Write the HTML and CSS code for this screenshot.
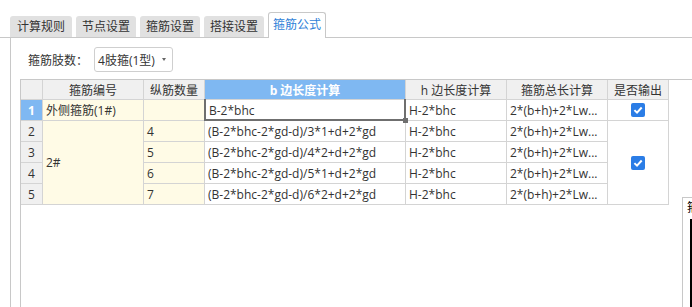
FILE: index.html
```html
<!DOCTYPE html>
<html>
<head>
<meta charset="utf-8">
<link rel="stylesheet" href="styles.css">
</head>
<body>
    <div class="tabs">
        <span class="tab">计算规则</span>
        <span class="tab">节点设置</span>
        <span class="tab">箍筋设置</span>
        <span class="tab">搭接设置</span>
        <span class="tab active">箍筋公式</span>
    </div>

    <div class="panel">
        <div class="form-row">
            <label class="label">箍筋肢数：</label>
            <div class="select">4肢箍(1型)<span class="caret"></span></div>
        </div>

        <div class="grid-wrap">
            <div class="grid">
                <div class="cell head"></div>
                <div class="cell head center">箍筋编号</div>
                <div class="cell head center">纵筋数量</div>
                <div class="cell head center active-col">b 边长度计算</div>
                <div class="cell head center">h 边长度计算</div>
                <div class="cell head center">箍筋总长计算</div>
                <div class="cell head center">是否输出</div>

                <div class="cell rowhead active-row">1</div>
                <div class="cell fixed">外侧箍筋(1#)</div>
                <div class="cell fixed"></div>
                <div class="cell selected">B-2*bhc</div>
                <div class="cell">H-2*bhc</div>
                <div class="cell">2*(b+h)+2*Lw...</div>
                <div class="cell center"><span class="check"><svg width="10" height="10" viewBox="0 0 10 10"><path d="M1.4 5.1 L4 7.6 L8.7 2.5" fill="none" stroke="#fff" stroke-width="2"/></svg></span></div>

                <div class="cell rowhead">2</div>
                <div class="cell fixed span4">2#</div>
                <div class="cell fixed">4</div>
                <div class="cell">(B-2*bhc-2*gd-d)/3*1+d+2*gd</div>
                <div class="cell">H-2*bhc</div>
                <div class="cell">2*(b+h)+2*Lw...</div>
                <div class="cell center span4"><span class="check"><svg width="10" height="10" viewBox="0 0 10 10"><path d="M1.4 5.1 L4 7.6 L8.7 2.5" fill="none" stroke="#fff" stroke-width="2"/></svg></span></div>

                <div class="cell rowhead">3</div>
                <div class="cell fixed">5</div>
                <div class="cell">(B-2*bhc-2*gd-d)/4*2+d+2*gd</div>
                <div class="cell">H-2*bhc</div>
                <div class="cell">2*(b+h)+2*Lw...</div>

                <div class="cell rowhead">4</div>
                <div class="cell fixed">6</div>
                <div class="cell">(B-2*bhc-2*gd-d)/5*1+d+2*gd</div>
                <div class="cell">H-2*bhc</div>
                <div class="cell">2*(b+h)+2*Lw...</div>

                <div class="cell rowhead">5</div>
                <div class="cell fixed">7</div>
                <div class="cell">(B-2*bhc-2*gd-d)/6*2+d+2*gd</div>
                <div class="cell">H-2*bhc</div>
                <div class="cell">2*(b+h)+2*Lw...</div>
            </div>
        </div>
    </div>

    <div class="side-pop">
        <span class="side-text">箍</span>
        <span class="side-bar"></span>
    </div>
</body>
</html>
```

FILE: styles.css
```css
body {
    margin: 0;
    width: 692px;
    height: 307px;
    overflow: hidden;
    position: relative;
    background: #fff;
    color: #333;
    font-family: "Open Sans", "Noto Sans CJK SC", sans-serif;
    font-size: 12px;
}
.tabs {
    display: flex;
    align-items: flex-end;
    gap: 4px;
    height: 25px;
    padding: 12px 0 0 10px;
    border-bottom: 1px solid #c8c8c8;
}
.tab {
    height: 21px;
    line-height: 21px;
    padding: 0 6px;
    background: #e1e1e1;
    border-radius: 3px 3px 0 0;
    color: #333;
}
.tab:first-child {
    padding: 0 7px;
}
.tab.active {
    height: 25px;
    line-height: 24px;
    margin-bottom: -1px;
    padding: 0 4px;
    background: #fff;
    border: 1px solid #c8c8c8;
    border-bottom: none;
    color: #2f7fd8;
}
.panel {
    margin-left: 10px;
    padding-left: 9px;
    height: 269px;
    border-left: 1px solid #c8c8c8;
}
.form-row {
    display: flex;
    align-items: center;
    height: 25px;
    padding-top: 9px;
}
.label {
    padding-left: 8px;
    margin-right: 6px;
}
.select {
    display: flex;
    align-items: center;
    box-sizing: border-box;
    width: 79px;
    height: 25px;
    padding-left: 3px;
    border: 1px solid #cfcfcf;
    border-radius: 3px;
}
.caret {
    margin-left: auto;
    margin-right: 6px;
    border-top: 3px solid #666;
    border-left: 2.5px solid transparent;
    border-right: 2.5px solid transparent;
}
.grid-wrap {
    margin-top: 7px;
    height: 227px;
    border-top: 1px solid #c8c8c8;
    border-left: 1px solid #c8c8c8;
}
.grid {
    display: grid;
    grid-template-columns: 22px 101px 61px 201px 101px 101px 61px;
    grid-template-rows: 20px repeat(5, 21px);
}
.cell {
    position: relative;
    box-sizing: border-box;
    display: flex;
    align-items: center;
    padding-left: 3px;
    border-right: 1px solid #d4d4d4;
    border-bottom: 1px solid #d4d4d4;
    white-space: nowrap;
    overflow: hidden;
}
.cell.selected {
    overflow: visible;
    padding-left: 4px;
}
.center {
    justify-content: center;
    padding-left: 0;
}
.head {
    background: #f0f0f0;
}
.head.active-col {
    background: #7fb8f2;
    color: #fff;
    font-weight: bold;
}
.rowhead {
    justify-content: center;
    padding-left: 0;
    background: #f0f0f0;
}
.rowhead.active-row {
    background: #7fb8f2;
    color: #fff;
    font-weight: bold;
}
.fixed {
    background: #fffbe6;
}
.span4 {
    grid-row: span 4;
}
.selected::after {
    content: "";
    position: absolute;
    top: -1px;
    left: -1px;
    right: -1px;
    bottom: -1px;
    border: 2px solid #6f6f6f;
    border-top: none;
}
.selected::before {
    content: "";
    position: absolute;
    right: -3px;
    bottom: -3px;
    width: 5px;
    height: 5px;
    background: #6f6f6f;
    z-index: 1;
}
.check {
    display: flex;
    align-items: center;
    justify-content: center;
    width: 14px;
    height: 14px;
    border-radius: 2px;
    background: #2b7de6;
}
.side-pop {
    position: absolute;
    left: 682px;
    top: 197px;
    width: 20px;
    height: 110px;
    border-left: 1px solid #c8c8c8;
    border-top: 1px solid #c8c8c8;
    background: #fff;
    overflow: hidden;
}
.side-text {
    position: absolute;
    left: 4px;
    top: 3px;
    color: #000;
    font-size: 12px;
    line-height: 14px;
}
.side-bar {
    position: absolute;
    left: 7px;
    top: 21px;
    width: 6px;
    height: 100px;
    background: #000;
}
```
